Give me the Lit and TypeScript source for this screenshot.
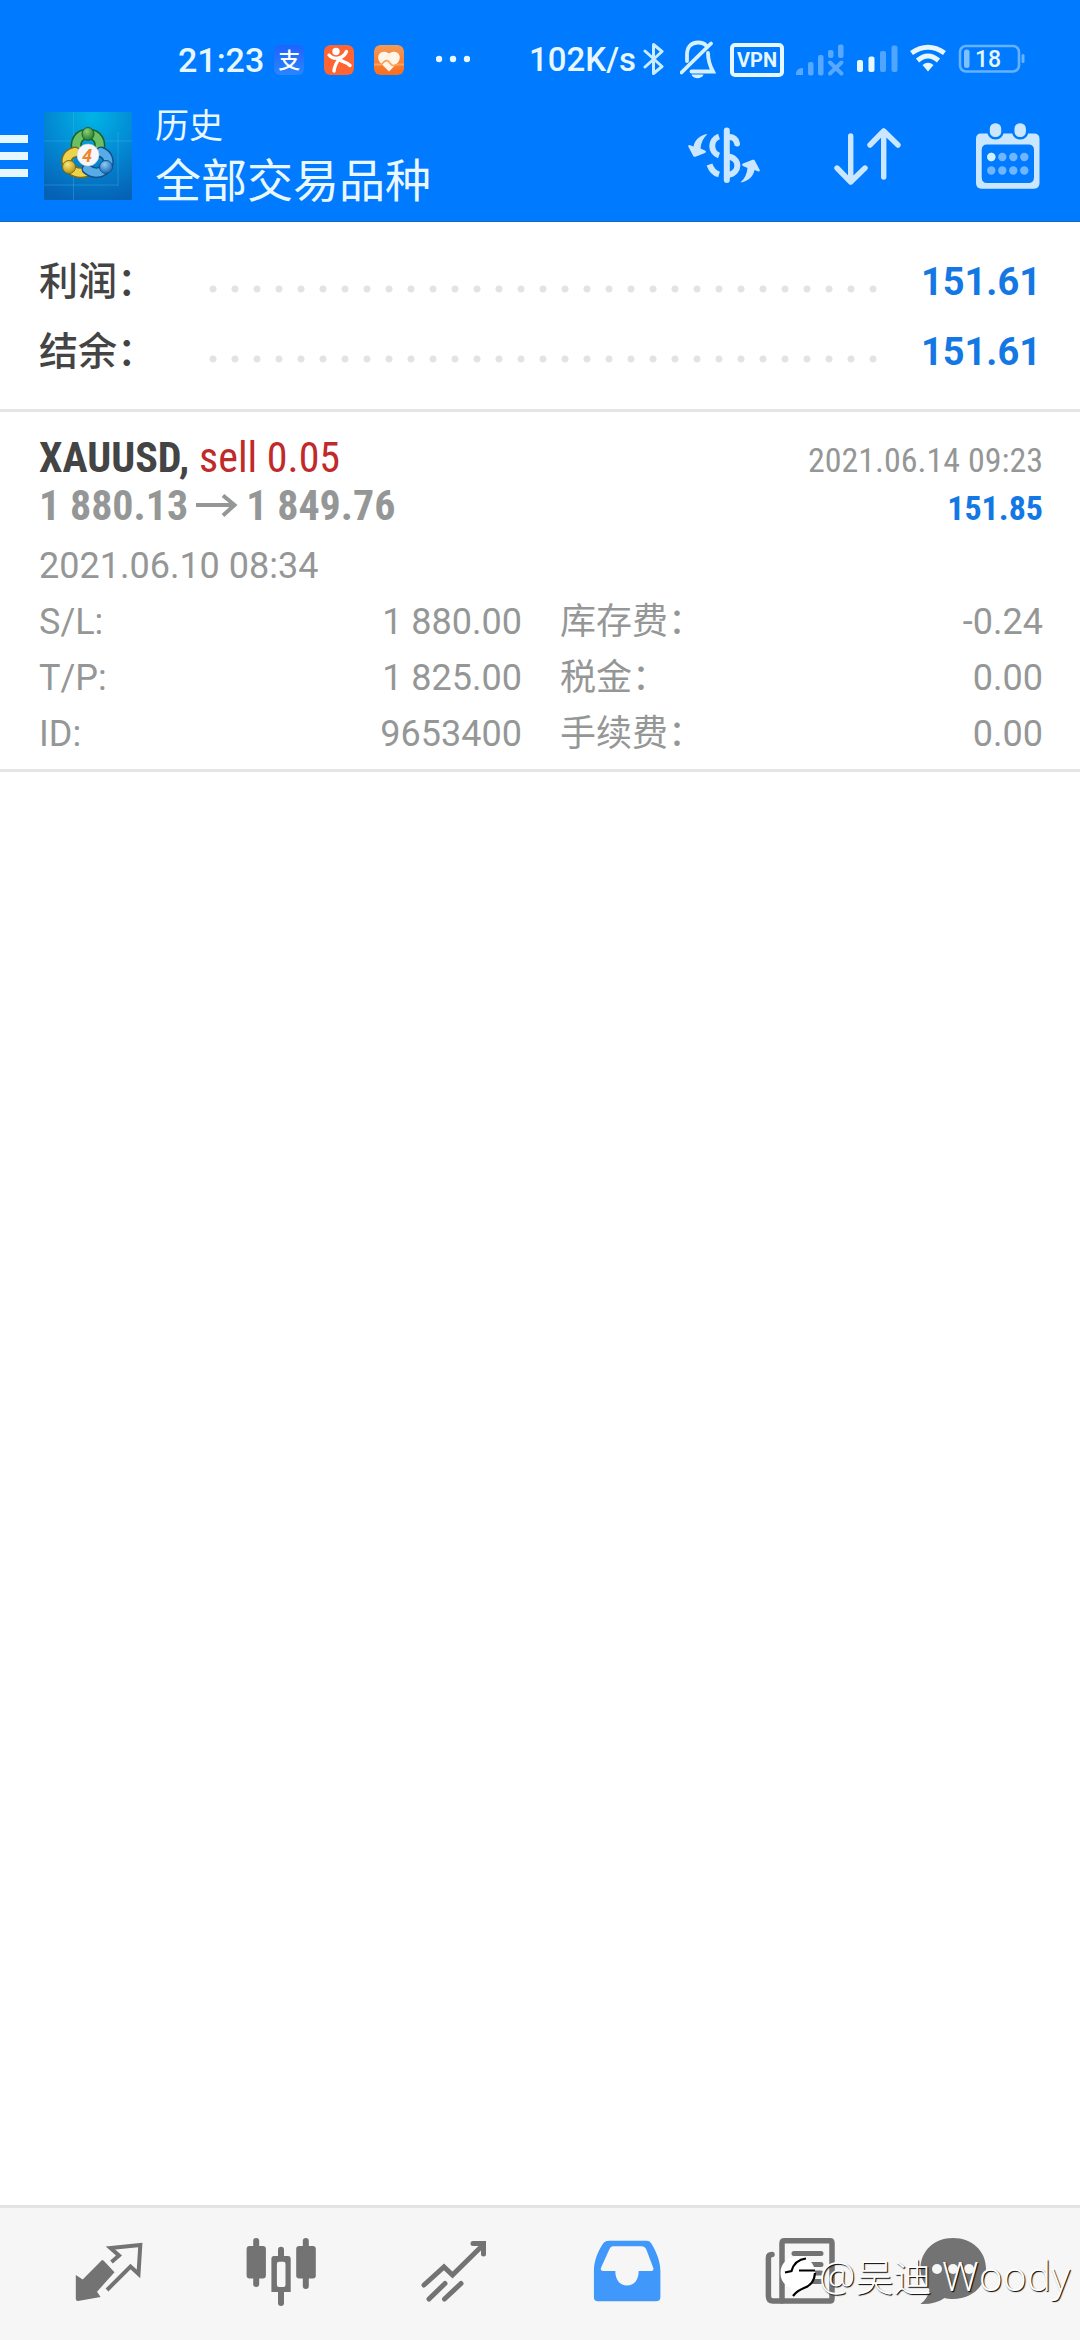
import { LitElement, html, css, svg } from "lit";
import { customElement, property } from "lit/decorators.js";

const sans = css`Roboto, "Noto Sans CJK SC", sans-serif`;
const condensed = css`"Roboto Condensed", "Liberation Sans Narrow", Roboto, "Noto Sans CJK SC", sans-serif`;

@customElement("status-bar")
class StatusBar extends LitElement {
  static styles = css`
    :host {
      display: flex;
      align-items: center;
      height: 40px;
      padding: 40px 55px 0 178px;
      color: #e6f7ff;
      font: 500 34px/40px ${sans};
    }
    svg { display: block; flex: none; }
    .apps, .system, .speed { display: flex; align-items: center; }
    .apps { gap: 20px; margin-left: 10px; }
    .app {
      width: 30px;
      height: 30px;
      border-radius: 6px;
    }
    .pay {
      background: linear-gradient(#1f62ff, #2a86ff);
      color: #fff;
      font: 500 22px/26px "Noto Sans CJK SC", sans-serif;
      text-align: center;
    }
    .more { margin-left: 32px; }
    .system { gap: 12px; margin-left: auto; }
    .speed { gap: 7px; font-size: 33px; }
    .vpn {
      box-sizing: border-box;
      width: 54px;
      height: 34px;
      border: 4px solid #e6f7ff;
      border-radius: 5px;
      font: 700 20px/26px ${sans};
      text-align: center;
    }
    .level { font: 500 23px ${sans}; }
  `;

  render() {
    return html`
      <span>21:23</span>
      <div class="apps">
        <span class="app pay">支</span>
        <svg class="app" viewBox="0 0 30 30" aria-hidden="true">
          <rect width="30" height="30" rx="6" fill="#ff6433" />
          <circle cx="12" cy="6.5" r="3.7" fill="#fff" />
          <path d="M5 10 C8 13.5 11 14 15 13 C19 12 21 10 22.500 6.500 M15 14.500 C12 18 10.500 21 10 26 M16 14.500 C18 17.500 22 16 26 20.500" fill="none" stroke="#fff" stroke-width="3.400" stroke-linecap="round" />
        </svg>
        <svg class="app" viewBox="0 0 30 30" aria-hidden="true">
          <defs>
            <linearGradient id="warm" x1="0" y1="0" x2="0" y2="1">
              <stop offset="0" stop-color="#f59a55" />
              <stop offset="1" stop-color="#fb6d1e" />
            </linearGradient>
          </defs>
          <rect width="30" height="30" rx="6" fill="url(#warm)" />
          <path d="M15 26.500 L6 17.500 C1 11 7 3.500 15 8.500 C23 3.500 29 11 24 17.500Z" fill="#fff6e8" />
          <path d="M0 19.500 H7 C9 19.500 9.500 15.500 12.500 15.500 C16 15.500 16.500 21.500 20 20.500 C22 20 22 19.500 24 19.500 H30" fill="none" stroke="#fba35f" stroke-width="1.800" />
        </svg>
      </div>
      <svg class="more" width="34" height="40" viewBox="0 0 34 40" fill="#e6f7ff" aria-hidden="true">
        <circle cx="3" cy="19" r="3.200" /><circle cx="17" cy="19" r="3.200" /><circle cx="31" cy="19" r="3.200" />
      </svg>
      <div class="system">
        <div class="speed">
          <span>102K/s</span>
          <svg width="25" height="40" viewBox="0 0 25 40" fill="none" stroke="#c9ecff" stroke-width="3" stroke-linejoin="round" stroke-linecap="round" aria-hidden="true">
            <path d="M2 11 L19 26.500 L10.500 33.500 V4.500 L19 11.500 L2 27" />
          </svg>
        </div>
        <svg width="38" height="40" viewBox="0 0 38 40" fill="none" stroke="#d5f0ff" stroke-width="3.800" stroke-linecap="round" aria-hidden="true">
          <path d="M31 3.500 L1.500 32.500 M7 21 V15 C7 7 11 2.500 18 2.500 C22 2.500 24.500 3.500 26.500 6 M28 13 C28 20 29 24 33 31.500 H11.500" />
          <path d="M11.500 34.500 H23.500 C22 39.500 13 39.500 11.500 34.500Z" fill="#d5f0ff" stroke="none" />
        </svg>
        <span class="vpn">VPN</span>
        <svg width="49" height="40" viewBox="0 0 49 40" fill="#fff" opacity="0.350" aria-hidden="true">
          <path d="M0 35 V33 Q1 28 7 28 V35Z" />
          <rect x="12" y="22" width="5.500" height="13.500" rx="2" />
          <rect x="22" y="15" width="5.500" height="20.500" rx="2" />
          <rect x="32" y="10" width="5.500" height="8" rx="2" />
          <rect x="42" y="4.500" width="5.500" height="13.500" rx="2" />
          <path d="M34 22.500 L45.500 33.500 M45.500 22.500 L34 33.500" stroke="#fff" stroke-width="4" stroke-linecap="round" />
        </svg>
        <svg width="41" height="40" viewBox="0 0 41 40" fill="#e6f7ff" aria-hidden="true">
          <rect x="0" y="20" width="6" height="12" rx="2" />
          <rect x="11.500" y="16.500" width="6" height="15.500" rx="2" />
          <rect x="23" y="11" width="6" height="21" rx="2" opacity="0.350" />
          <rect x="34.500" y="5.500" width="6" height="26.500" rx="2" opacity="0.350" />
        </svg>
        <svg width="36" height="40" viewBox="0 0 36 40" fill="none" stroke="#e6f7ff" stroke-width="5" aria-hidden="true">
          <path d="M1.500 13 Q18 1.500 34.500 13" />
          <path d="M7.500 20.500 Q18 11.500 28.500 20.500" />
          <path d="M18 31.500 L12.500 25 Q18 20.500 23.500 25Z" fill="#e6f7ff" stroke="none" />
        </svg>
        <svg width="67" height="40" viewBox="0 0 67 40" aria-label="18%">
          <rect x="2" y="6" width="59" height="25.500" rx="6" fill="none" stroke="#66b2ff" stroke-width="2.600" />
          <rect x="6" y="9.500" width="5.500" height="18.500" rx="2.500" fill="#7fc0ff" />
          <rect x="63.500" y="14" width="3" height="9" rx="1.500" fill="#66b2ff" />
          <text class="level" x="17" y="27" fill="#e6f7ff">18</text>
        </svg>
      </div>
    `;
  }
}

@customElement("tool-bar")
class ToolBar extends LitElement {
  static styles = css`
    :host {
      display: flex;
      align-items: center;
      box-sizing: border-box;
      height: 142px;
      padding: 10px 40px 0 0;
      border-bottom: 1px solid #1a68c4;
      color: #e9f8ff;
      font-family: ${sans};
    }
    svg { display: block; }
    button {
      padding: 0;
      border: 0;
      background: none;
    }
    .logo { margin: 0 23px 0 16px; }
    .digit { font: italic 700 17px "Open Sans", sans-serif; }
    .titles { flex: 1; }
    .section, .filter { margin: 0; font-weight: 400; }
    .section { font-size: 34px; line-height: 50px; }
    .filter { font-size: 46px; line-height: 60px; }
    .actions { display: flex; align-items: center; gap: 74px; }
  `;

  render() {
    return html`
      <button aria-label="菜单">
        <svg width="28" height="42" viewBox="0 0 28 42" fill="#e6f7ff">
          <rect width="28" height="8" y="0" /><rect width="28" height="8" y="17" /><rect width="28" height="8" y="34" />
        </svg>
      </button>
      <svg class="logo" width="88" height="88" viewBox="0 0 88 88" aria-hidden="true">
        <defs>
          <radialGradient id="sky" cx="0.550" cy="0.050" r="1">
            <stop offset="0" stop-color="#00b4e6" /><stop offset="0.500" stop-color="#0389d3" /><stop offset="1" stop-color="#0561b4" />
          </radialGradient>
          <radialGradient id="green" cx="0.400" cy="0.300" r="0.700"><stop offset="0" stop-color="#8fd07a" /><stop offset="1" stop-color="#1f7c2c" /></radialGradient>
          <radialGradient id="gold" cx="0.400" cy="0.300" r="0.700"><stop offset="0" stop-color="#fbe878" /><stop offset="1" stop-color="#b7961a" /></radialGradient>
          <radialGradient id="blue" cx="0.400" cy="0.300" r="0.700"><stop offset="0" stop-color="#8ccdf5" /><stop offset="1" stop-color="#1b69b4" /></radialGradient>
        </defs>
        <rect width="88" height="88" fill="url(#sky)" />
        <path d="M29.500 0 V88 M74 20 V74 M0 29 H88 M0 73 H74" stroke="#4fb8ea" stroke-opacity="0.350" fill="none" />
        <g fill="none" stroke-linecap="round">
          <path d="M34 40 C29 30 35 22 44 22 C53 22 59 30 54 40" stroke="#17612a" stroke-width="11" />
          <path d="M34 40 C29 30 35 22 44 22 C53 22 59 30 54 40" stroke="#6cbf62" stroke-width="8" />
          <path d="M31 40 C23 42 21 48 24 54 C28 60 35 62 42 60" stroke="#7d6c10" stroke-width="11" />
          <path d="M31 40 C23 42 21 48 24 54 C28 60 35 62 42 60" stroke="#ecd34b" stroke-width="8" />
          <path d="M57 40 C65 43 66 51 62 56 C57 62 49 62 43 57" stroke="#124f8d" stroke-width="11" />
          <path d="M57 40 C65 43 66 51 62 56 C57 62 49 62 43 57" stroke="#57ace8" stroke-width="8" />
        </g>
        <ellipse cx="44" cy="22" rx="6" ry="6.500" fill="url(#green)" stroke="#17612a" />
        <circle cx="25" cy="55" r="6.500" fill="url(#gold)" stroke="#7d6c10" />
        <circle cx="62" cy="55" r="6.500" fill="url(#blue)" stroke="#124f8d" />
        <circle cx="44" cy="43" r="11" fill="#f6f7fa" stroke="#c6ccd4" stroke-width="0.600" />
        <text class="digit" x="38.500" y="49.500" fill="#f08428">4</text>
      </svg>
      <div class="titles">
        <h1 class="section">历史</h1>
        <p class="filter">全部交易品种</p>
      </div>
      <div class="actions">
        <button aria-label="货币">
          <svg width="72" height="58" viewBox="0 0 72 58" fill="none" stroke="#cbe7ff" stroke-width="6">
            <path d="M38.800 3.500 V53" stroke-linecap="round" />
            <path d="M40 10 C45.500 9.500 48.500 12.500 49 16.500" stroke-linecap="round" />
            <path d="M40 29.500 C52.500 31 52.500 46 40 48" />
            <path d="M31 9.500 C22 12.500 22 25.500 31 28.500" />
            <path d="M21.500 37.500 C23.500 43.500 26 46 31 47.500" />
            <path d="M19.500 7 C12 8 6.500 13 5.500 19.500 L1.500 18 C0 18 0 19 0.500 20 L5 28.500 C5.500 30 7 30 8 29.500 L17 26 C18.500 25 18 24 17 23.500 L12.500 21.500 C13 15.500 15.500 10.500 19.500 7Z" fill="#cbe7ff" stroke="none" />
            <path d="M19.500 7 C12 8 6.500 13 5.500 19.500 L1.500 18 C0 18 0 19 0.500 20 L5 28.500 C5.500 30 7 30 8 29.500 L17 26 C18.500 25 18 24 17 23.500 L12.500 21.500 C13 15.500 15.500 10.500 19.500 7Z" transform="rotate(180 36 31.300)" fill="#cbe7ff" stroke="none" />
          </svg>
        </button>
        <button aria-label="排序">
          <svg width="68" height="58" viewBox="0 0 68 58" fill="none" stroke="#cbe7ff" stroke-width="5.400" stroke-linecap="round" stroke-linejoin="round">
            <path d="M16.700 9 V55 M3 41 L16.700 55 L31 41" />
            <path d="M49.700 50 V4 M36 18 L49.700 4 L64 18" />
          </svg>
        </button>
        <button aria-label="日期">
          <svg width="64" height="66" viewBox="0 0 64 66">
            <path fill="#cbe7ff" fill-rule="evenodd" d="M5 10.500 H58 Q63.500 10.500 63.500 16 V60 Q63.500 65.700 58 65.700 H5.500 Q0 65.700 0 60 V16 Q0 10.500 5 10.500Z M11 21.500 Q5.700 21.500 5.700 27 V54 Q5.700 60 11 60 H52.500 Q58 60 58 54 V27 Q58 21.500 52.500 21.500Z" />
            <g fill="#cbe7ff" stroke="#007aff" stroke-width="2.400">
              <rect x="12.600" y="-1" width="13.800" height="16.200" rx="6.500" />
              <rect x="37.300" y="-1" width="13.800" height="16.200" rx="6.500" />
            </g>
            <g fill="#6fb5ff">
              ${[34, 47.5].map((y) => [15.3, 26.3, 37.3, 48.3].map((x) => svg`<circle cx=${x} cy=${y} r="4.200" />`))}
            </g>
            <circle cx="15.300" cy="34" r="4.200" fill="#d3f0ff" />
          </svg>
        </button>
      </div>
    `;
  }
}

@customElement("account-summary")
class AccountSummary extends LitElement {
  static styles = css`
    :host {
      display: block;
      padding: 25px 39px 22px;
      border-bottom: 3px solid #e5e5e5;
      font: 500 39px/70px ${sans};
    }
    .rows { margin: 0; }
    .row { display: flex; align-items: center; }
    .label { flex: none; width: 163px; color: #444; }
    .dots {
      flex: 1;
      height: 16px;
      margin-top: 14px;
      background: radial-gradient(circle, #e3e3e3 3px, transparent 4px) 0 0 / 22px 16px;
    }
    .value {
      width: 155px;
      margin: 0;
      color: #1478e4;
      font-size: 38px;
      font-weight: 700;
      text-align: right;
    }
  `;

  rows = [["利润", "151.61"], ["结余", "151.61"]];

  render() {
    return html`<dl class="rows">
      ${this.rows.map(([label, value]) => html`
        <div class="row">
          <dt class="label">${label}：</dt>
          <span class="dots"></span>
          <dd class="value">${value}</dd>
        </div>`)}
    </dl>`;
  }
}

interface Deal {
  symbol: string;
  action: string;
  open: string;
  close: string;
  closed: string;
  profit: string;
  opened: string;
  details: string[][];
}

@customElement("deal-card")
class DealCard extends LitElement {
  static styles = css`
    :host {
      display: block;
      padding: 22px 37px 7px 39px;
      border-bottom: 3px solid #e5e5e5;
      color: #959797;
      font: 36px/56px ${sans};
    }
    .line {
      display: flex;
      align-items: baseline;
      justify-content: space-between;
      height: 48px;
      font-family: ${condensed};
      font-size: 34px;
      line-height: 48px;
    }
    .main { font-size: 42px; font-weight: 700; }
    .symbol { color: #444; }
    .action { color: #c12a2a; font-weight: 400; }
    .arrow { height: 26px; margin: 0 8px; }
    .profit { color: #1478e4; font-weight: 700; }
    .opened { margin-top: 8px; }
    .details {
      display: grid;
      grid-template-columns: 1fr 1fr;
      column-gap: 38px;
      margin: 0;
    }
    .pair { display: flex; justify-content: space-between; }
    .amount { margin: 0; }
  `;

  @property({ attribute: false }) deal!: Deal;

  render() {
    const d = this.deal;
    return html`
      <div class="line">
        <span class="main"><span class="symbol">${d.symbol},</span> <span class="action">${d.action}</span></span>
        <time>${d.closed}</time>
      </div>
      <div class="line">
        <span class="main">${d.open}<svg class="arrow" width="42" viewBox="0 0 42 26" fill="none" stroke="#959797" stroke-width="4" role="img" aria-label="至"><path d="M0 11 H39 M27 1.500 L38.500 11 L27 21.500" /></svg>${d.close}</span>
        <span class="profit">${d.profit}</span>
      </div>
      <div class="opened"><time>${d.opened}</time></div>
      <dl class="details">
        ${d.details.map(([name, amount]) => html`
          <div class="pair"><dt>${name}</dt><dd class="amount">${amount}</dd></div>`)}
      </dl>
    `;
  }
}

const tabs = [
  { name: "行情", icon: svg`
      <path d="M30 22 Q31 22 32 23 L42.500 34.300 L25 53.700 L28.600 59 L6 63 Q3.800 63 3.800 61 V37 L10.700 41.500Z" fill="currentColor" />
      <path d="M39.500 24 L47 17.500 L38.500 10 L68.300 7 L66.500 36 L58.500 28.500 L35 52" fill="none" stroke="currentColor" stroke-width="4" />` },
  { name: "图表", icon: svg`
      <g fill="currentColor">
        <rect x="1.600" y="8" width="19.300" height="32.500" rx="3" /><rect x="8.200" y="0" width="6" height="49" rx="3" />
        <rect x="51.200" y="8" width="19.600" height="32.500" rx="3" /><rect x="57.800" y="0" width="6" height="51" rx="3" />
        <path fill-rule="evenodd" d="M29 18 H43 Q45.700 18 45.700 21 V54 H26.400 V21 Q26.400 18 29 18Z M34 23.700 Q31.900 23.700 31.900 26 V47 Q31.900 49 34 49 H38.500 Q40.500 49 40.500 47 V26 Q40.500 23.700 38.500 23.700Z" />
        <path d="M33 19 V12 Q33 8.700 36 8.700 Q39 8.700 39 12 V19Z M33 53 H39 V65 Q39 68 36 68 Q33 68 33 65Z" />
      </g>` },
  { name: "交易", icon: svg`
      <path d="M6 47 L26 29 L34.500 37 L65 7 M55 5.500 H65.500 V16 M11 61 L27 45.500 M26.500 61 L43 45.500" fill="none" stroke="currentColor" stroke-width="5" stroke-linecap="round" />` },
  { name: "历史", icon: svg`
      <path fill="currentColor" fill-rule="evenodd" d="M18 2.700 H55.500 Q58.500 2.700 60 5 C65 13 69.400 23 69.400 33 V59 Q69.400 63.300 65 63.300 H7 Q2.900 63.300 2.900 59 V33 C2.900 23 7 13 12.500 5 Q14.500 2.700 18 2.700Z M22 8.300 Q19.500 8.300 18.500 11 L9.900 30 Q9.300 33 12 33 H24.300 C24.300 42 29 47.500 36 47.500 C43 47.500 47.700 42 47.700 33 H60.500 Q63 33 62.300 30 L55.500 12 Q54 8.300 50.500 8.300Z" />` },
  { name: "新闻", icon: svg`
      <g fill="none" stroke="currentColor" stroke-width="5.500" stroke-linecap="round">
        <path d="M18 63 H66 Q68 63 68 60.500 V5.500 Q68 2.800 66 2.800 H20.500 Q18 2.800 18 5.500 V60" />
        <path d="M18 63 H9 Q4.400 63 4.400 58 V20 Q4.400 16.500 8 16.500" />
        <path d="M30 15.500 H57 M47 26.500 H57 M30 26.500 H37 M30 35 H37 M47 35 H57 M30 43.500 H57" stroke-width="5" />
      </g>` },
  { name: "消息", icon: svg`
      <path fill="currentColor" d="M36 0 C55 0 69 13 69 30.500 C69 48 55 61 36 61 C33 61 30 60.700 27.500 60 C21 64.500 13 66.500 3.500 66 C8.500 62 11.500 57.500 12.500 51.500 C7 46 3.500 39 3.500 30.500 C3.500 13 17 0 36 0Z" />
      <g fill="#f6f6f6"><circle cx="20" cy="31" r="5" /><circle cx="36" cy="31" r="5" /><circle cx="52" cy="31" r="5" /></g>` },
];

@customElement("tab-bar")
class TabBar extends LitElement {
  static styles = css`
    :host {
      display: grid;
      grid-template-columns: repeat(5, 173fr) 133fr;
      height: 132px;
      padding: 0 61px 0 22px;
      border-top: 3px solid #e4e4e4;
      background: #f6f6f6;
    }
    .tab {
      display: grid;
      place-items: center;
      padding: 0;
      border: 0;
      background: none;
      color: #737373;
    }
    .tab[aria-current="page"] { color: #4098fb; }
  `;

  @property() current = "历史";

  render() {
    return tabs.map((tab) => html`
      <button class="tab" aria-label=${tab.name} aria-current=${tab.name === this.current ? "page" : "false"}>
        <svg width="72" height="72" viewBox="0 0 72 72">${tab.icon}</svg>
      </button>`);
  }
}

@customElement("app-root")
class AppRoot extends LitElement {
  static styles = css`
    :host {
      display: flex;
      flex-direction: column;
      position: relative;
      min-height: 100vh;
      background: #fff;
    }
    header { background: #007aff; }
    main { flex: 1; }
    .credit {
      display: flex;
      align-items: center;
      gap: 2px;
      position: absolute;
      right: 10px;
      bottom: 36px;
      color: #fff;
      font: 300 41px/56px "Open Sans", "Noto Sans CJK SC", sans-serif;
      text-shadow: 1px 1px 1px #000;
      pointer-events: none;
    }
    .han { font-size: 38px; }
  `;

  deal: Deal = {
    symbol: "XAUUSD",
    action: "sell 0.05",
    open: "1 880.13",
    close: "1 849.76",
    closed: "2021.06.14 09:23",
    profit: "151.85",
    opened: "2021.06.10 08:34",
    details: [
      ["S/L:", "1 880.00"], ["库存费：", "-0.24"],
      ["T/P:", "1 825.00"], ["税金：", "0.00"],
      ["ID:", "9653400"], ["手续费：", "0.00"],
    ],
  };

  render() {
    return html`
      <header>
        <status-bar></status-bar>
        <tool-bar></tool-bar>
      </header>
      <main>
        <account-summary></account-summary>
        <deal-card .deal=${this.deal}></deal-card>
      </main>
      <tab-bar role="navigation"></tab-bar>
      <div class="credit">
        <svg width="38" height="42" viewBox="0 0 38 42" aria-hidden="true">
          <path d="M1.500 18 C1.500 8 9 1.500 19 1.500 C29 1.500 36 8 36 18 C36 27 30 32 22 34 C18 36 16 38 13.500 41 L12 33 C5 30 1.500 25 1.500 18Z" fill="#fff" />
          <path d="M6 17.500 L12.500 16 C14.500 9 18.500 4.500 27 3.500 M20 15.500 H36 M36 18 C35.500 26 31 31 25 33 C20 35 17 37 14 41" fill="none" stroke="#000" stroke-width="2.200" />
        </svg>
        <span>@<span class="han">吴迪</span> Woody</span>
      </div>
    `;
  }
}
